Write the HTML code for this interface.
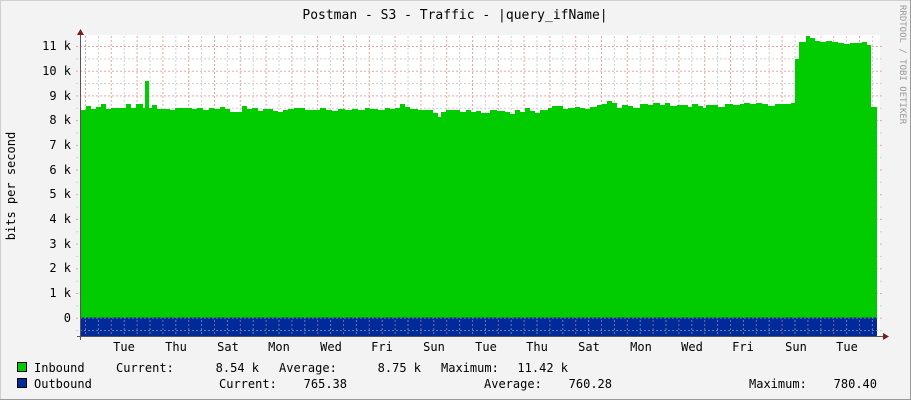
<!DOCTYPE html>
<html><head><meta charset="utf-8"><style>
html,body{margin:0;padding:0;background:#f3f3f3;}
svg{display:block;}
text{font-family:"DejaVu Sans Mono","Liberation Mono",monospace;font-size:12px;fill:#000;}
</style></head><body>
<svg width="911" height="400" xmlns="http://www.w3.org/2000/svg">
<defs>
<pattern id="gv" x="85" y="0" width="25.8" height="4" patternUnits="userSpaceOnUse">
<rect x="0" y="0" width="1" height="2" fill="#f2a0a0"/>
<rect x="12.9" y="0" width="1" height="2" fill="#d0d0d0"/>
</pattern>
<pattern id="gh" x="0" y="46" width="4" height="24.7" patternUnits="userSpaceOnUse">
<rect x="0" y="0" width="2" height="1" fill="#f2a0a0"/>
<rect x="0" y="12.35" width="2" height="1" fill="#d0d0d0"/>
</pattern>
</defs>
<rect x="0" y="0" width="911" height="400" fill="#f3f3f3"/>
<rect x="0.5" y="0.5" width="910" height="399" fill="none" stroke="#cfcfcf"/>
<line x1="0" y1="399.5" x2="911" y2="399.5" stroke="#9a9a9a"/>
<line x1="910.5" y1="0" x2="910.5" y2="400" stroke="#9a9a9a"/>
<rect x="81" y="35" width="799" height="301" fill="#fff"/>
<rect x="81" y="35" width="803" height="301" fill="url(#gv)"/>
<rect x="76" y="35" width="808" height="301" fill="url(#gh)"/>
<path fill="#00cc00" d="M81,318 L81,110 H86 V106 H91 V109 H96 V107 H101 V104 H106 V109 H111 V108 H126 V104 H131 V108 H136 V104 H143 V108 H145 V81 H149 V108 H152 V105 H157 V109 H170 V110 H175 V108 H192 V109 H197 V108 H203 V110 H209 V108 H214 V109 H220 V107 H225 V109 H230 V112 H242 V106 H247 V109 H252 V108 H258 V111 H263 V109 H273 V111 H278 V112 H283 V110 H288 V109 H294 V108 H305 V110 H320 V108 H326 V110 H332 V111 H338 V109 H345 V110 H352 V109 H358 V110 H365 V108 H370 V109 H378 V110 H385 V108 H390 V109 H395 V108 H400 V104 H405 V107 H410 V109 H418 V110 H433 V113 H438 V117 H441 V112 H446 V110 H460 V112 H466 V110 H471 V112 H476 V111 H481 V113 H490 V110 H497 V111 H505 V112 H510 V114 H515 V110 H520 V112 H525 V108 H530 V111 H535 V113 H540 V110 H548 V108 H552 V106 H563 V109 H568 V108 H575 V107 H580 V108 H585 V109 H590 V107 H597 V105 H602 V104 H607 V101 H612 V103 H617 V108 H622 V105 H628 V106 H633 V108 H640 V104 H648 V105 H653 V103 H660 V105 H665 V103 H670 V106 H677 V105 H688 V107 H692 V104 H698 V106 H703 V108 H706 V105 H712 V105 H718 V107 H725 V104 H733 V105 H740 V104 H744 V103 H750 V104 H756 V103 H762 V104 H768 V106 H775 V104 H791 V103 H795 V59 H799 V42 H803 V42 H806 V36 H810 V38 H815 V41 H820 V42 H826 V41 H832 V42 H838 V43 H844 V44 H850 V43 H862 V42 H867 V45 H871 V107 H877 V318 Z"/>
<rect x="81" y="317.5" width="796" height="18.5" fill="#002a97"/>
<rect x="81" y="317.5" width="796" height="18.5" fill="url(#gv)" opacity="0.5"/>
<rect x="81" y="317.5" width="796" height="18.5" fill="url(#gh)" opacity="0.5"/>
<line x1="80.5" y1="33" x2="80.5" y2="340" stroke="#555"/>
<line x1="77" y1="336.5" x2="884" y2="336.5" stroke="#555"/>
<path d="M77,35 L80.5,29 L84,35 Z" fill="#7a1d1d"/>
<path d="M883,333 L889,336.5 L883,340 Z" fill="#7a1d1d"/>
<text x="455" y="19" text-anchor="middle" style="font-size:13px">Postman - S3 - Traffic - |query_ifName|</text>
<g text-anchor="end">
<text x="71" y="50">11 k</text><text x="71" y="75">10 k</text><text x="71" y="100">9 k</text>
<text x="71" y="124">8 k</text><text x="71" y="149">7 k</text><text x="71" y="174">6 k</text>
<text x="71" y="198">5 k</text><text x="71" y="223">4 k</text><text x="71" y="248">3 k</text>
<text x="71" y="272">2 k</text><text x="71" y="297">1 k</text><text x="71" y="322">0</text>
</g>
<text transform="translate(15,186) rotate(-90)" text-anchor="middle">bits per second</text>
<text transform="translate(900,5) rotate(90)" style="font-size:9px;fill:#999">RRDTOOL / TOBI OETIKER</text>
<g text-anchor="middle">
<text x="124" y="351">Tue</text><text x="176" y="351">Thu</text><text x="228" y="351">Sat</text>
<text x="279" y="351">Mon</text><text x="331" y="351">Wed</text><text x="382" y="351">Fri</text>
<text x="434" y="351">Sun</text><text x="486" y="351">Tue</text><text x="537" y="351">Thu</text>
<text x="589" y="351">Sat</text><text x="641" y="351">Mon</text><text x="692" y="351">Wed</text>
<text x="743" y="351">Fri</text><text x="796" y="351">Sun</text><text x="847" y="351">Tue</text>
</g>
<rect x="17.5" y="362.5" width="9" height="9" fill="#00cc00" stroke="#000"/>
<rect x="17.5" y="378.5" width="9" height="9" fill="#002a97" stroke="#000"/>
<text x="34" y="372">Inbound</text>
<text x="116" y="372">Current:</text>
<text x="259" y="372" text-anchor="end">8.54 k</text>
<text x="279" y="372">Average:</text>
<text x="421" y="372" text-anchor="end">8.75 k</text>
<text x="441" y="372">Maximum:</text>
<text x="568" y="372" text-anchor="end">11.42 k</text>
<text x="34" y="388">Outbound</text>
<text x="219" y="388">Current:</text>
<text x="347" y="388" text-anchor="end">765.38</text>
<text x="484" y="388">Average:</text>
<text x="612" y="388" text-anchor="end">760.28</text>
<text x="749" y="388">Maximum:</text>
<text x="877" y="388" text-anchor="end">780.40</text>
</svg>
</body></html>
